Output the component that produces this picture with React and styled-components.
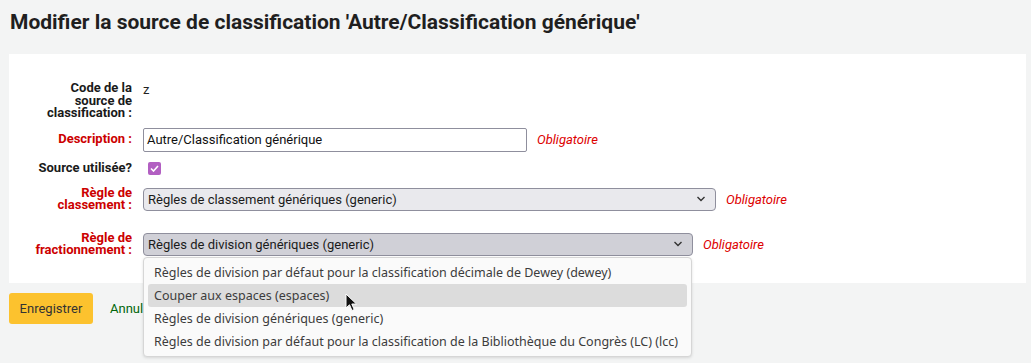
import React from "react";
import styled, { createGlobalStyle } from "styled-components";

const splitOptions = [
  "Règles de division par défaut pour la classification décimale de Dewey (dewey)",
  "Couper aux espaces (espaces)",
  "Règles de division génériques (generic)",
  "Règles de division par défaut pour la classification de la Bibliothèque du Congrès (LC) (lcc)",
];

const Chevron = () => (
  <svg width="10" height="6" viewBox="0 0 10 6">
    <polyline points="1.5,1 5,4.5 8.5,1" fill="none" stroke="#333" strokeWidth="1.4" />
  </svg>
);

const Cursor = () => (
  <svg width="14" height="20" viewBox="0 0 14 20">
    <path d="M1 1 L1 15 L4.5 11.8 L7 17.5 L9.2 16.5 L6.8 11 L11.5 11 Z" fill="#111" stroke="#fff" strokeWidth="1" />
  </svg>
);

const App = () => (
  <>
    <GlobalStyles />
    <Page>
      <Title>Modifier la source de classification 'Autre/Classification générique'</Title>
      <Panel>
        <Row $mb={8}>
          <Label>Code de la source de classification :</Label>
          <Value>z</Value>
        </Row>
        <Row $center $mb={10}>
          <Label $required>Description :</Label>
          <TextInput>Autre/Classification générique</TextInput>
          <Required>Obligatoire</Required>
        </Row>
        <Row $center $mb={12}>
          <Label>Source utilisée?</Label>
          <CheckBox>
            <svg width="9" height="7" viewBox="0 0 9 7">
              <polyline points="1,3.5 3.5,6 8,1" fill="none" stroke="#fff" strokeWidth="1.6" />
            </svg>
          </CheckBox>
        </Row>
        <Row $center $mb={20}>
          <Label $required>Règle de classement :</Label>
          <Select $width={573}>
            Règles de classement génériques (generic)
            <Chevron />
          </Select>
          <Required>Obligatoire</Required>
        </Row>
        <Row $center $mb={0}>
          <Label $required>Règle de fractionnement :</Label>
          <SelectWrap>
            <Select $width={550} $open>
              Règles de division génériques (generic)
              <Chevron />
            </Select>
            <Menu>
              {splitOptions.map((opt, i) => (
                <MenuItem key={opt} $active={i === 1}>
                  {opt}
                  {i === 1 && (
                    <CursorSpot>
                      <Cursor />
                    </CursorSpot>
                  )}
                </MenuItem>
              ))}
            </Menu>
          </SelectWrap>
          <Required>Obligatoire</Required>
        </Row>
      </Panel>
      <Actions>
        <SaveButton>Enregistrer</SaveButton>
        <CancelLink href="#">Annuler</CancelLink>
      </Actions>
    </Page>
  </>
);

const GlobalStyles = createGlobalStyle`
  html, body {
    margin: 0;
    padding: 0;
    background: #f3f4f4;
    font-family: Roboto, "Liberation Sans", sans-serif;
    color: #222;
    overflow: hidden;
  }
`;

const Page = styled.div`
  width: 1031px;
  height: 363px;
  padding: 0 5px 0 9px;
  box-sizing: border-box;
`;

const Title = styled.h1`
  margin: 0;
  padding: 10px 0 0 1px;
  height: 54px;
  box-sizing: border-box;
  font-size: 21px;
  line-height: 25px;
  font-weight: 700;
  color: #1f1f1f;
`;

const Panel = styled.div`
  background: #fff;
  height: 229px;
  box-sizing: border-box;
  padding: 28px 0 0 0;
`;

const Row = styled.div`
  display: flex;
  align-items: ${(p) => (p.$center ? "center" : "flex-start")};
  margin-bottom: ${(p) => p.$mb}px;
`;

const Label = styled.div`
  width: 100px;
  margin: 0 11px 0 23px;
  text-align: right;
  font-size: 13px;
  line-height: 12.5px;
  font-weight: 700;
  color: ${(p) => (p.$required ? "#cc0000" : "#1a1a1a")};
`;

const Value = styled.div`
  font-size: 13px;
  line-height: 14px;
  padding-top: 1px;
`;

const TextInput = styled.div`
  width: 384px;
  height: 24px;
  box-sizing: border-box;
  border: 1px solid #8f8f9d;
  border-radius: 2px;
  padding: 0 3px;
  font-size: 13px;
  line-height: 22px;
  color: #111;
`;

const Required = styled.span`
  margin-left: 10px;
  font-size: 13px;
  font-style: italic;
  color: #dd0000;
`;

const CheckBox = styled.span`
  margin-left: 5px;
  width: 13px;
  height: 13px;
  border-radius: 2px;
  background: #b25fc2;
  display: flex;
  align-items: center;
  justify-content: center;
`;

const SelectWrap = styled.div`
  position: relative;
`;

const Select = styled.div`
  width: ${(p) => p.$width}px;
  height: 23px;
  box-sizing: border-box;
  border: 1px solid #8f8f9d;
  border-radius: 4px;
  background: ${(p) => (p.$open ? "#d0d0d7" : "#e9e9ed")};
  display: flex;
  align-items: center;
  justify-content: space-between;
  padding: 0 9px 0 4px;
  font-size: 13px;
  color: #1b1b1b;
`;

const Menu = styled.div`
  position: absolute;
  top: 24px;
  left: 0;
  width: 549px;
  box-sizing: border-box;
  padding: 3px 4px 3px 4px;
  background: #fafafa;
  border: 1px solid #d6d6d6;
  border-radius: 4px;
  box-shadow: 0 1px 3px rgba(0, 0, 0, 0.12);
  z-index: 5;
`;

const MenuItem = styled.div`
  position: relative;
  height: 23px;
  line-height: 23px;
  padding: 0 6px;
  border-radius: 3px;
  white-space: nowrap;
  font-family: "Noto Sans", "DejaVu Sans", sans-serif;
  font-size: 12.5px;
  color: #3c3c3c;
  background: ${(p) => (p.$active ? "#dcdcdc" : "transparent")};
`;

const CursorSpot = styled.span`
  position: absolute;
  left: 197px;
  top: 9px;
  line-height: 0;
`;

const Actions = styled.div`
  display: flex;
  align-items: center;
  padding-top: 10px;
`;

const SaveButton = styled.button`
  width: 84px;
  height: 31px;
  border: none;
  border-radius: 3px;
  background: #fcc22e;
  font-family: Roboto, sans-serif;
  font-size: 13px;
  color: #333;
  padding: 0;
`;

const CancelLink = styled.a`
  margin-left: 17px;
  font-size: 13px;
  color: #00660a;
  text-decoration: none;
`;

export default App;
